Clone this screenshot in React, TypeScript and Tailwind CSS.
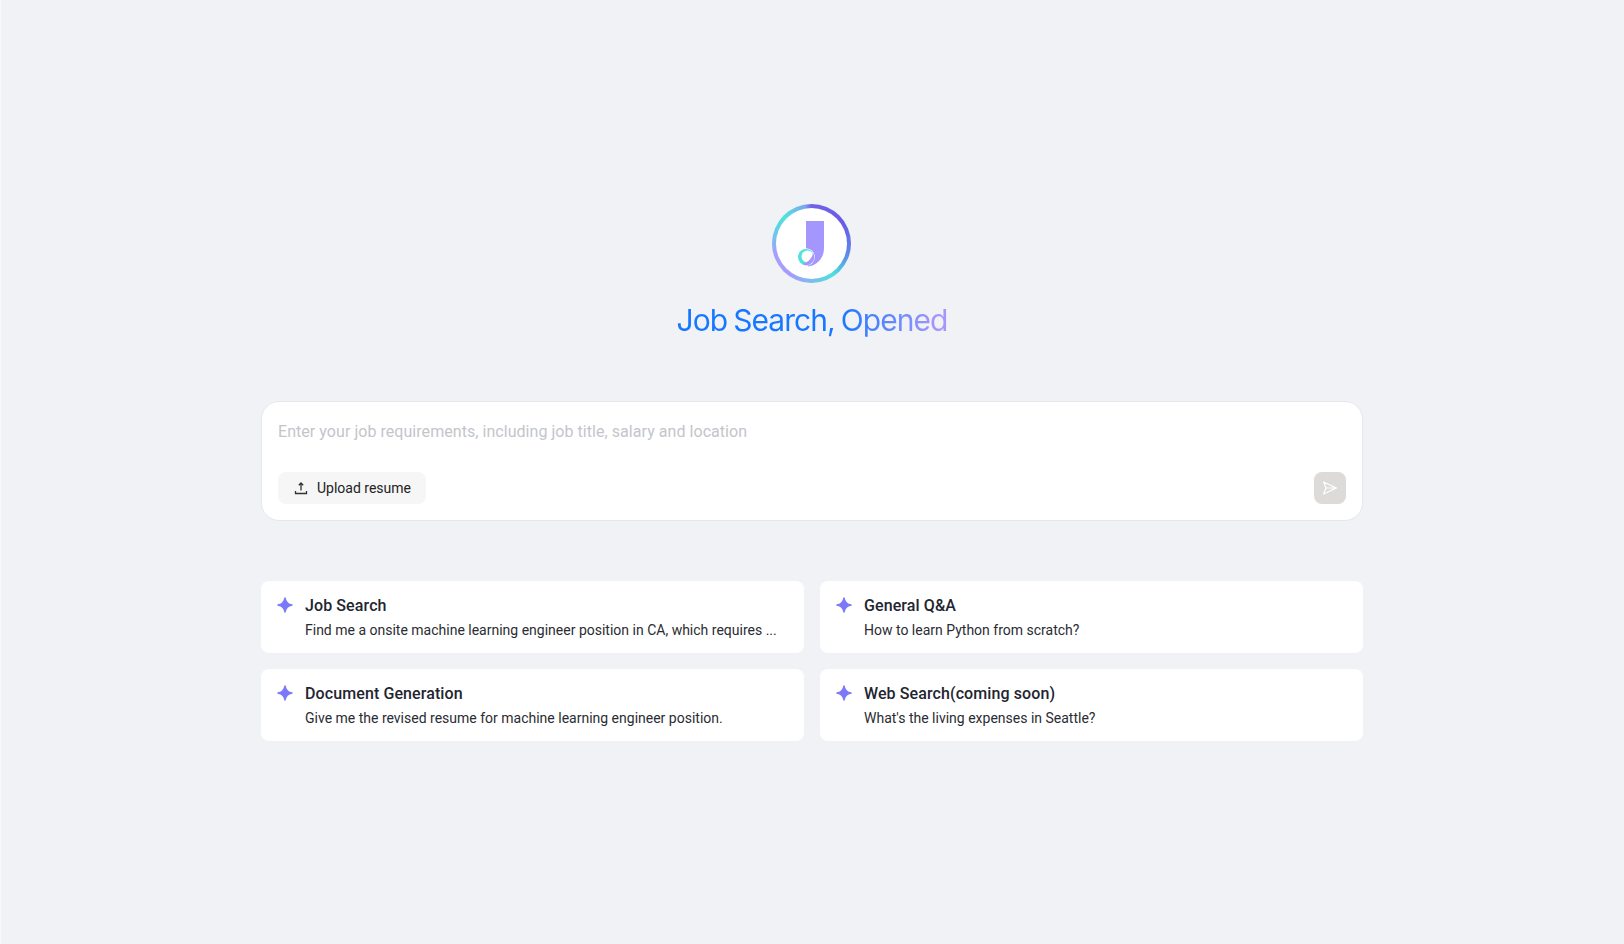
import React from "react";

const cards = [
  ["Job Search", "Find me a onsite machine learning engineer position in CA, which requires ..."],
  ["General Q&A", "How to learn Python from scratch?"],
  ["Document Generation", "Give me the revised resume for machine learning engineer position."],
  ["Web Search(coming soon)", "What's the living expenses in Seattle?"],
];

function Sparkle() {
  return (
    <svg width="16" height="16" viewBox="0 0 16 16" className="shrink-0">
      <path d="M8 1Q9 7 15 8 9 9 8 15 7 9 1 8 7 7 8 1Z" fill="#7b79f7" stroke="#7b79f7" strokeWidth="1.500" strokeLinejoin="round" />
    </svg>
  );
}

function Logo() {
  return (
    <div className="w-[79px] h-[79px] mr-[1px] rounded-full p-[4px] bg-[conic-gradient(from_0deg,#6f62e8_0deg,#6a5ae6_60deg,#5b8fe8_110deg,#4fe0dc_145deg,#a79bfd_215deg,#a5a0fc_255deg,#63cfe6_290deg,#4fe3db_315deg,#7ea6ef_350deg,#6f62e8_360deg)]">
      <div className="w-full h-full rounded-full bg-white flex items-center justify-center">
        <svg width="71" height="71" viewBox="1 1 71 71">
          <path d="M31 14H49V41C49 51 42 58.500 33 59.500L31 50Z" fill="#a596fd" />
          <circle cx="31" cy="50" r="8.800" fill="#fff" />
          <circle cx="31" cy="50" r="8" fill="#4fe3db" />
          <circle cx="32.500" cy="49.500" r="6" fill="#fff" />
          <path d="M38 46A8 8 0 0 1 27 57C32 56 37 52 38 46Z" fill="#a596fd" />
        </svg>
      </div>
    </div>
  );
}

export default function App() {
  return (
    <div className="min-h-[944px] w-full bg-[#f0f2f6] shadow-[inset_1px_0_0_#f7f8fa] flex flex-col items-center justify-center font-['Roboto',sans-serif]">
      <Logo />
      <h1 className="mt-[15px] h-[44px] font-['Inter',sans-serif] text-[30px] leading-[44px] font-normal tracking-[-0.95px] [word-spacing:-1.500px] text-transparent bg-clip-text bg-[linear-gradient(90deg,#1677ff_0%,#1677ff_60%,#a596fd_96%)]">
        Job Search, Opened
      </h1>

      <div className="mt-[59px] w-[1102px] h-[120px] rounded-[18px] bg-white border border-[#e5e7ec] px-[15px] py-[16px] pl-[16px] flex flex-col justify-between">
        <div className="pt-[1px] text-[16px] leading-[26px] tracking-[0.05px] text-[#c4c5cb]">
          Enter your job requirements, including job title, salary and location
        </div>
        <div className="flex items-center justify-between pr-[1px]">
          <button className="h-[32px] w-[148px] pl-[1px] rounded-[8px] bg-[#f6f6f6] flex items-center justify-center gap-[9px] text-[14px] text-[#222]">
            <svg width="14" height="14" viewBox="0 0 14 14" fill="none" stroke="#333" strokeWidth="1.300">
              <path d="M7 2V9.500M4.800 4.200 7 2 9.200 4.200M1.500 10v2.500h11V10" />
            </svg>
            <span className="pt-[1px]">Upload resume</span>
          </button>
          <button className="h-[32px] w-[32px] rounded-[8px] bg-[#dcdbd9] flex items-center justify-center">
            <svg width="16" height="16" viewBox="0 0 16 16" fill="none" stroke="#fff" strokeWidth="1.200" strokeLinejoin="round">
              <path d="M1.500 2 14.500 8 1.500 14 4 8ZM4 8h10.500" />
            </svg>
          </button>
        </div>
      </div>

      <div className="mt-[60px] w-[1102px] grid grid-cols-2 gap-[16px]">
        {cards.map(([title, text]) => (
          <div key={title} className="h-[72px] rounded-[8px] bg-white pl-[16px] pr-[16px] pt-[13px] flex gap-[12px] min-w-0">
            <div className="mt-[3px]"><Sparkle /></div>
            <div className="min-w-0 flex-1">
              <div className="text-[16px] leading-[24px] font-medium tracking-[0.1px] text-[#222530]">{title}</div>
              <div className="text-[14px] leading-[24px] text-[#2a2c33]">{text}</div>
            </div>
          </div>
        ))}
      </div>
    </div>
  );
}
